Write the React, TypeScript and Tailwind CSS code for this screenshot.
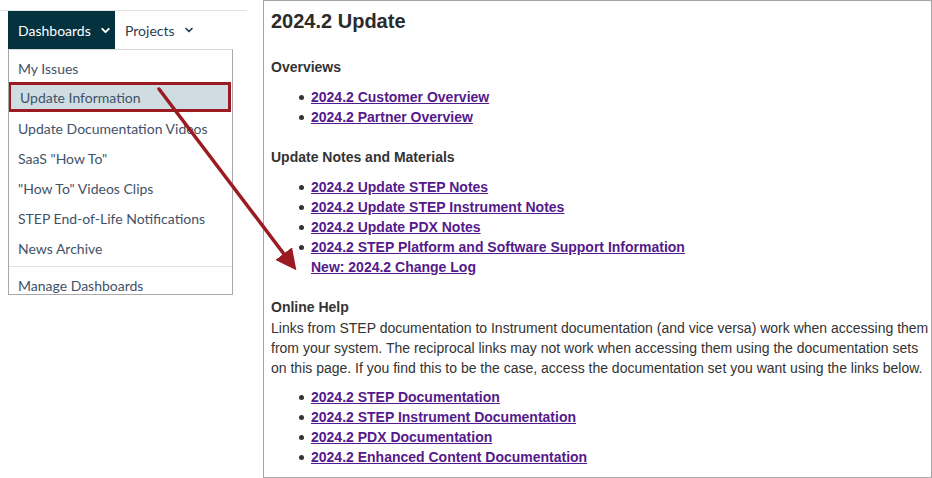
import React from "react";
import { ChevronDown } from "lucide-react";

const menuItems = [
  "My Issues",
  "Update Information",
  "Update Documentation Videos",
  'SaaS "How To"',
  '"How To" Videos Clips',
  "STEP End-of-Life Notifications",
  "News Archive",
];

const overviews = ["2024.2 Customer Overview", "2024.2 Partner Overview"];

const notes = [
  "2024.2 Update STEP Notes",
  "2024.2 Update STEP Instrument Notes",
  "2024.2 Update PDX Notes",
  "2024.2 STEP Platform and Software Support Information",
];

const docs = [
  "2024.2 STEP Documentation",
  "2024.2 STEP Instrument Documentation",
  "2024.2 PDX Documentation",
  "2024.2 Enhanced Content Documentation",
];

function LinkItem({ text, bullet = true }: { text: string; bullet?: boolean }) {
  return (
    <li className="flex items-center h-[20px]">
      <span className="w-[20px] flex justify-center">
        {bullet && <span className="block w-[5px] h-[5px] rounded-full bg-[#333]" />}
      </span>
      <a href="#" className="text-[#551a8b] underline font-bold whitespace-nowrap">
        {text}
      </a>
    </li>
  );
}

export default function App() {
  return (
    <div className="relative w-[932px] h-[478px] flex bg-white font-['Liberation_Sans',Arial,sans-serif] text-[#333] overflow-hidden">
      {/* left: nav + dropdown */}
      <div className="w-[263px] shrink-0 pt-[10px] font-['Lato','Noto_Sans',sans-serif] text-[14px]">
        <div className="w-[247px] border-t border-[#e3e3e3] flex pl-2">
          <div className="w-[107px] h-[38px] bg-[#05323f] text-white flex items-center pl-[10px] gap-[8px]">
            <span>Dashboards</span>
            <ChevronDown size={13} strokeWidth={3.5} />
          </div>
          <div className="h-[38px] text-[#2d3e50] flex items-center pl-[10px] gap-[8px]">
            <span>Projects</span>
            <ChevronDown size={12} strokeWidth={3.5} />
          </div>
        </div>
        <div className="ml-2 w-[225px] h-[246px] overflow-hidden border border-t-[#d8d8d8] border-[#a8a8a8] pt-[3px] text-[#3f5268]">
          {menuItems.map((item) =>
            item === "Update Information" ? (
              <div key={item} className="h-[30px] -mt-[1px] mb-[1px] w-[223px] -ml-px flex items-center pl-[9px] bg-[#cfdde2] border-[3px] border-[#9b1b22]">
                {item}
              </div>
            ) : (
              <div key={item} className="h-[30px] flex items-center pl-[9px]">
                {item}
              </div>
            )
          )}
          <div className="mt-[3px] border-t border-[#e2e2e8]" />
          <div className="h-[30px] flex items-center pl-[9px] mt-[3px]">Manage Dashboards</div>
        </div>
      </div>

      {/* right: update panel */}
      <div className="flex-1 h-[478px] border border-[#a6a6a6] pl-[7px] pt-[8px] text-[14px] leading-[20px] overflow-hidden">
        <h1 className="text-[20px] leading-[24px] font-bold text-[#2b2b2b]">2024.2 Update</h1>

        <h2 className="mt-[24px] font-bold">Overviews</h2>
        <ul className="mt-[10px] pl-[20px]">
          {overviews.map((t) => (
            <LinkItem key={t} text={t} />
          ))}
        </ul>

        <h2 className="mt-[20px] font-bold">Update Notes and Materials</h2>
        <ul className="mt-[10px] pl-[20px]">
          {notes.map((t) => (
            <LinkItem key={t} text={t} />
          ))}
          <LinkItem text="New: 2024.2 Change Log" bullet={false} />
        </ul>

        <h2 className="mt-[20px] font-bold">Online Help</h2>
        <p className="mt-[1px] whitespace-nowrap">
          Links from STEP documentation to Instrument documentation (and vice versa) work when accessing them
          <br />
          from your system. The reciprocal links may not work when accessing them using the documentation sets
          <br />
          on this page. If you find this to be the case, access the documentation set you want using the links below.
        </p>
        <ul className="mt-[9px] pl-[20px]">
          {docs.map((t) => (
            <LinkItem key={t} text={t} />
          ))}
        </ul>
      </div>

      {/* annotation arrow */}
      <svg className="absolute left-0 top-0 pointer-events-none" width="932" height="478">
        <defs>
          <marker id="head" markerWidth="6" markerHeight="6" refX="3" refY="3" orient="auto" markerUnits="strokeWidth">
            <path d="M0,0 L6,3 L0,6 Z" fill="#9b1b22" />
          </marker>
        </defs>
        <line x1="159" y1="89" x2="290" y2="262" stroke="#9b1b22" strokeWidth="3.5" strokeLinecap="round" markerEnd="url(#head)" />
      </svg>
    </div>
  );
}
